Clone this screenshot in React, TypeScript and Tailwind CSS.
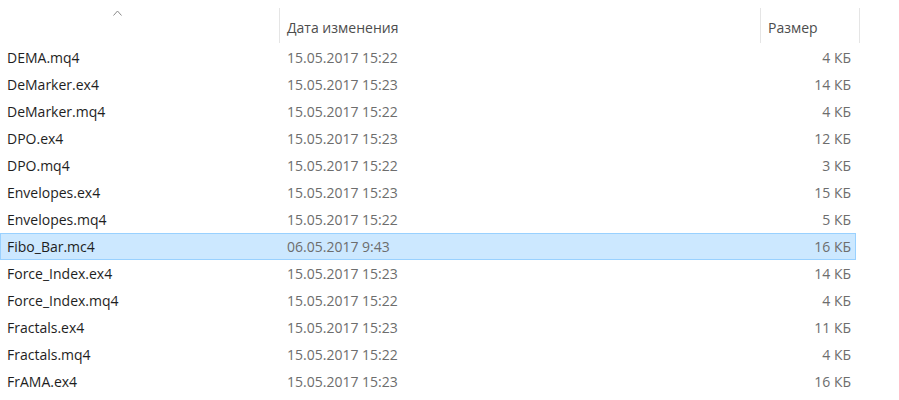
import React from 'react';

interface FileRow {
  name: string;
  date: string;
  size: string;
  selected?: boolean;
}

const rows: FileRow[] = [
  { name: 'DEMA.mq4', date: '15.05.2017 15:22', size: '4 КБ' },
  { name: 'DeMarker.ex4', date: '15.05.2017 15:23', size: '14 КБ' },
  { name: 'DeMarker.mq4', date: '15.05.2017 15:22', size: '4 КБ' },
  { name: 'DPO.ex4', date: '15.05.2017 15:23', size: '12 КБ' },
  { name: 'DPO.mq4', date: '15.05.2017 15:22', size: '3 КБ' },
  { name: 'Envelopes.ex4', date: '15.05.2017 15:23', size: '15 КБ' },
  { name: 'Envelopes.mq4', date: '15.05.2017 15:22', size: '5 КБ' },
  { name: 'Fibo_Bar.mc4', date: '06.05.2017 9:43', size: '16 КБ', selected: true },
  { name: 'Force_Index.ex4', date: '15.05.2017 15:23', size: '14 КБ' },
  { name: 'Force_Index.mq4', date: '15.05.2017 15:22', size: '4 КБ' },
  { name: 'Fractals.ex4', date: '15.05.2017 15:23', size: '11 КБ' },
  { name: 'Fractals.mq4', date: '15.05.2017 15:22', size: '4 КБ' },
  { name: 'FrAMA.ex4', date: '15.05.2017 15:23', size: '16 КБ' },
];

const App: React.FC = () => {
  return (
    <div className="w-[899px] h-[400px] overflow-hidden bg-white text-[14px] font-['Open_Sans','Noto_Sans',sans-serif]">
      {/* Header */}
      <div className="flex h-[44px] items-stretch">
        <div className="relative w-[279px] shrink-0">
          <svg
            className="absolute left-[113px] top-[10px]"
            width="9"
            height="6"
            viewBox="0 0 9 6"
            fill="none"
            stroke="#8a8a8a"
            strokeWidth="1"
          >
            <path d="M0.5 5.5 L4.5 1 L8.5 5.5" />
          </svg>
        </div>
        <div className="w-[481px] shrink-0 border-l border-[#e5e5e5] mt-[8px] mb-[1px] flex items-center pt-[3px] pl-[7px] text-[#4d4d4d]">
          Дата изменения
        </div>
        <div className="w-[100px] shrink-0 border-l border-r border-[#e5e5e5] mt-[8px] mb-[1px] flex items-center pt-[3px] pl-[7px] text-[#4d4d4d]">
          Размер
        </div>
      </div>

      {/* Rows */}
      <div className="flex flex-col">
        {rows.map(row => (
          <div
            key={row.name}
            className={`flex h-[27px] w-[856px] items-center border ${
              row.selected ? 'bg-[#cce8ff] border-[#99d1ff]' : 'border-transparent'
            }`}
          >
            <div className="w-[279px] shrink-0 pl-[6px] text-[#1e1e1e]">{row.name}</div>
            <div className="w-[481px] shrink-0 pl-[7px] text-[#6d6d6d]">{row.date}</div>
            <div className="flex-1 pr-[4px] text-right text-[#6d6d6d]">{row.size}</div>
          </div>
        ))}
      </div>
    </div>
  );
};

export default App;
